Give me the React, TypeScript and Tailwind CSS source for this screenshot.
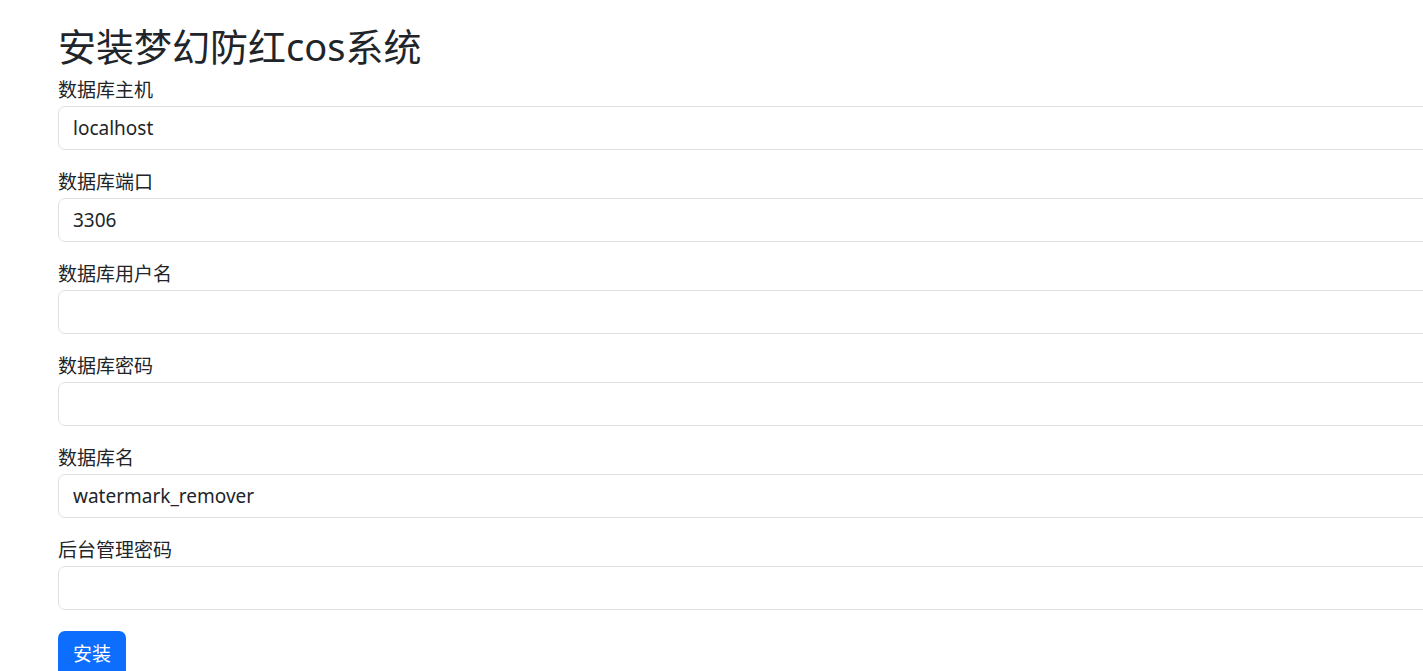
const fields = [
  { label: "数据库主机", value: "localhost" },
  { label: "数据库端口", value: "3306" },
  { label: "数据库用户名", value: "" },
  { label: "数据库密码", value: "" },
  { label: "数据库名", value: "watermark_remover" },
  { label: "后台管理密码", value: "" },
];

const App = () => {
  return (
    <div
      className="h-screen w-screen overflow-hidden bg-white text-[#212529]"
      style={{ fontFamily: '"Noto Sans", "Noto Sans CJK SC", sans-serif' }}
    >
      <div className="pl-[58px] pt-[25px] w-[1480px]">
        <h1 className="text-[38px] leading-[42px] font-normal mb-[10px]">安装梦幻防红cos系统</h1>

        <form>
          {fields.map((field) => (
            <div key={field.label} className="mb-[19px]">
              <label className="block text-[19px] leading-[26px] mb-[3px]">{field.label}</label>
              <input
                type="text"
                defaultValue={field.value}
                className="block w-[1420px] h-[44px] px-[14px] text-[19px] border border-[#dee2e6] rounded-[7px] bg-white text-[#212529] outline-none"
              />
            </div>
          ))}

          <div className="flex items-start pt-[2px]">
            <button
              type="button"
              className="w-[68px] h-[46px] rounded-[7px] bg-[#0d6efd] text-white text-[19px] leading-[28px]"
            >
              安装
            </button>
            <div className="ml-[700px] pt-[36px] text-[30px] font-bold leading-[40px] tracking-[6px] text-[#212529]">
              使用说明
            </div>
          </div>
        </form>
      </div>
    </div>
  );
};

export default App;
